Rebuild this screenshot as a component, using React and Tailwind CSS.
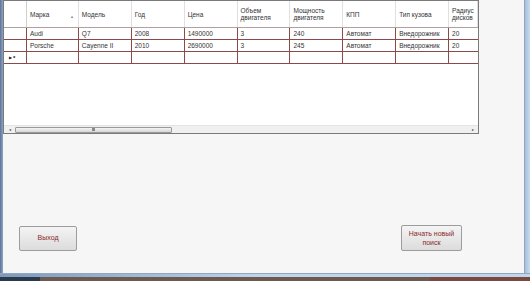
import React from "react";

const cols = [
  { w: 52, h: ["Марка"], sort: true },
  { w: 53, h: ["Модель"] },
  { w: 53, h: ["Год"] },
  { w: 53, h: ["Цена"] },
  { w: 53, h: ["Объем", "двигателя"] },
  { w: 53, h: ["Мощность", "двигателя"] },
  { w: 53, h: ["КПП"] },
  { w: 53, h: ["Тип кузова"] },
  { w: 29, h: ["Радиус", "дисков"] },
];

const rows = [
  ["Audi", "Q7", "2008", "1490000", "3", "240", "Автомат", "Внедорожник", "20"],
  ["Porsche", "Cayenne II", "2010", "2690000", "3", "245", "Автомат", "Внедорожник", "20"],
  ["", "", "", "", "", "", "", "", ""],
];

export default function App() {
  return (
    <div
      className="w-[530px] h-[281px] flex flex-col overflow-hidden bg-[#f4f4f4]"
      style={{ fontFamily: '"Liberation Sans", Arial, sans-serif' }}
    >
      <div className="flex flex-1 min-h-0">
        <div className="w-[3px] bg-gradient-to-r from-[#5b7599] to-[#8ea4c4]" />
        <div className="flex-1 flex flex-col bg-[#f6f6f6]">
          {/* Grid */}
          <div className="w-[476px] h-[134px] border border-[#7a7a7a] bg-white flex flex-col text-[6.5px] text-[#333]">
            <div className="flex-1 flex flex-col">
              {/* header */}
              <div className="flex h-[27px] border-b border-[#b0a0a0]">
                <div className="w-[23px] border-r border-[#d0d0d0]" />
                {cols.map((c, i) => (
                  <div
                    key={i}
                    style={{ width: c.w }}
                    className="relative border-r border-[#e0e0e0] flex flex-col justify-center pl-[3px] leading-[7px]"
                  >
                    {c.h.map((t, j) => (
                      <span key={j}>{t}</span>
                    ))}
                    {c.sort && (
                      <span className="absolute right-[4px] top-[12px] text-[4px] text-[#888]">▲</span>
                    )}
                  </div>
                ))}
              </div>
              {rows.map((r, ri) => (
                <div key={ri} className="flex h-[12px] border-b border-[#8a4a4a]">
                  <div className="w-[23px] border-r border-[#8a4a4a] flex items-center pl-[5px] text-[#111]">
                    {ri === 2 ? (
                      <span className="flex items-center gap-[1px]">
                        <span className="text-[4px]">▶</span>
                        <span className="text-[6px] font-bold leading-[4px]">*</span>
                      </span>
                    ) : null}
                  </div>
                  {cols.map((c, i) => (
                    <div
                      key={i}
                      style={{ width: c.w }}
                      className={`flex items-center pl-[3px] ${i < cols.length - 1 ? "border-r border-[#8a4a4a]" : ""}`}
                    >
                      {r[i]}
                    </div>
                  ))}
                </div>
              ))}
            </div>
            {/* horizontal scrollbar */}
            <div className="h-[8px] flex items-center bg-[#f0f0f0] border-t border-[#e4e4e4]">
              <div className="w-[11px] flex justify-center text-[4px] text-[#444]">◂</div>
              <div className="w-[157px] h-[6px] rounded-[1px] border border-[#9a9a9a] bg-gradient-to-b from-[#f4f4f4] to-[#d6d6d6] flex items-center justify-center">
                <div className="w-[3px] h-[3px] bg-[#888]" />
              </div>
              <div className="flex-1" />
              <div className="w-[10px] flex justify-center text-[4px] text-[#444]">▸</div>
            </div>
          </div>
          <div className="flex-1 flex items-end justify-between pb-[22px] pl-[16px] pr-[62px]">
            <button className="w-[58px] h-[25px] border border-[#9c9c9c] rounded-[2px] bg-gradient-to-b from-[#f4f4f4] to-[#dcdcdc] text-[7px] text-[#8b2a2a]">
              Выход
            </button>
            <button className="w-[61px] h-[26px] border border-[#9c9c9c] rounded-[2px] bg-gradient-to-b from-[#f4f4f4] to-[#dcdcdc] text-[7px] leading-[9px] text-[#8b2a2a]">
              Начать новый
              <br />
              поиск
            </button>
          </div>
        </div>
        <div className="w-[6px] bg-gradient-to-r from-[#a7c0dc] to-[#c9dcee] border-l border-[#8fa6c4]" />
      </div>
      <div className="h-[4px] bg-gradient-to-r from-[#7f98bb] via-[#c2d6ea] to-[#c2d6ea] border-t border-[#8fa6c4]" />
      <div className="h-[4px] flex">
        <div className="w-[40px] bg-[#2a3a4a]" />
        <div className="flex-1 bg-[#6c5a50]" />
        <div className="w-[100px] bg-[#7a4a40]" />
      </div>
    </div>
  );
}
